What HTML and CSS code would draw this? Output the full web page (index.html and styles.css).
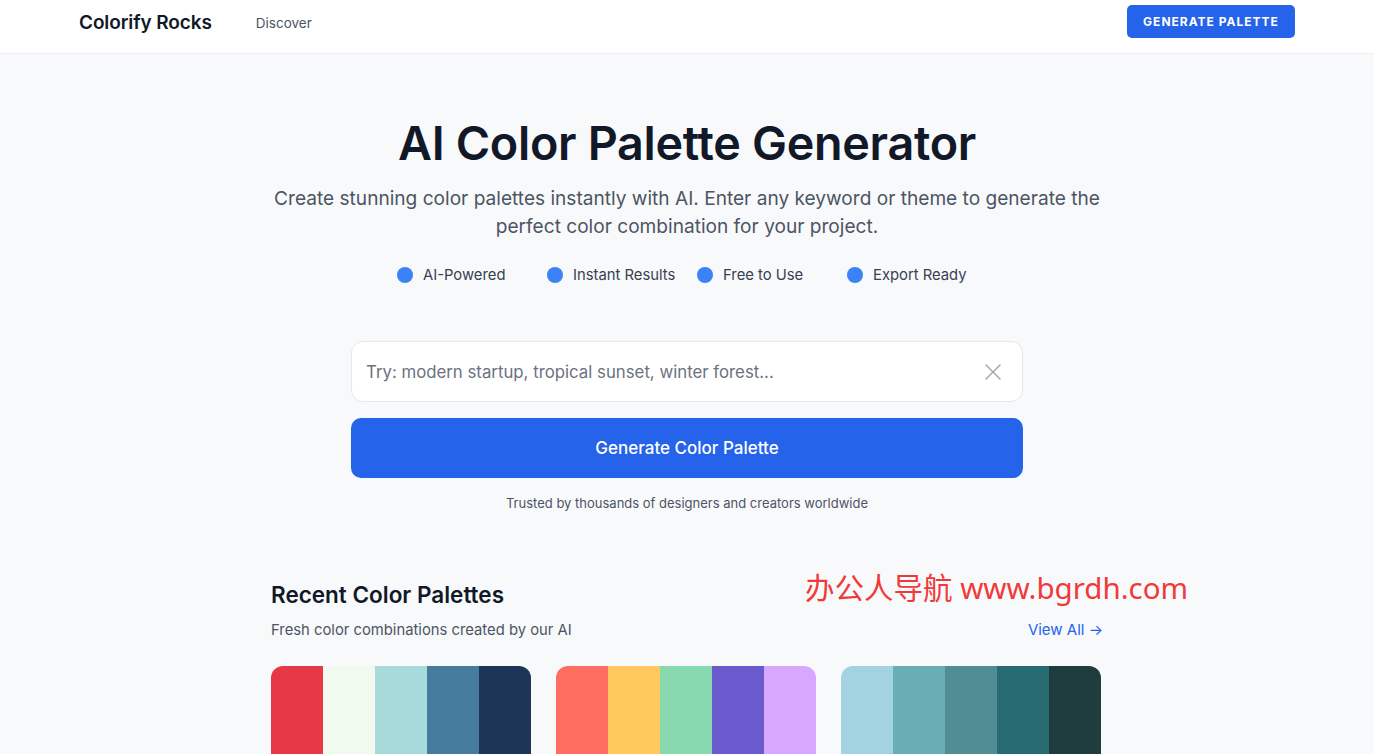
FILE: index.html
```html
<!DOCTYPE html>
<html lang="en">

<head>
    <meta charset="utf-8">
    <title>Colorify Rocks - AI Color Palette Generator</title>
    <link rel="stylesheet" href="styles.css">
</head>

<body>
    <header class="topbar">
        <div class="topbar-inner">
            <div class="brand">
                <a class="logo" href="#">Colorify Rocks</a>
                <a class="nav-link" href="#">Discover</a>
            </div>
            <button class="btn-small">Generate Palette</button>
        </div>
    </header>

    <main>
        <section class="hero">
            <h1>AI Color Palette Generator</h1>
            <p class="lead">
                Create stunning color palettes instantly with AI. Enter any keyword or theme to generate the
                perfect color combination for your project.
            </p>
            <ul class="features">
                <li><span class="dot"></span>AI-Powered</li>
                <li><span class="dot"></span>Instant Results</li>
                <li><span class="dot"></span>Free to Use</li>
                <li><span class="dot"></span>Export Ready</li>
            </ul>

            <form class="search">
                <div class="search-box">
                    <input type="text" placeholder="Try: modern startup, tropical sunset, winter forest...">
                    <button type="button" class="clear" aria-label="Clear">
                        <svg width="18" height="18" viewBox="0 0 18 18" fill="none" stroke="currentColor"
                            stroke-width="1.4" stroke-linecap="round">
                            <path d="M2 2L16 16M16 2L2 16" />
                        </svg>
                    </button>
                </div>
                <button type="button" class="btn-big">Generate Color Palette</button>
                <p class="trusted">Trusted by thousands of designers and creators worldwide</p>
            </form>
        </section>

        <section class="recent">
            <div class="recent-head">
                <h2>Recent Color Palettes</h2>
                <div class="recent-sub">
                    <span>Fresh color combinations created by our AI</span>
                    <a href="#">View All &rarr;</a>
                </div>
            </div>
            <div class="cards">
                <div class="card">
                    <span style="background:#e63946"></span>
                    <span style="background:#f1faee"></span>
                    <span style="background:#a8dadc"></span>
                    <span style="background:#457b9d"></span>
                    <span style="background:#1d3557"></span>
                </div>
                <div class="card">
                    <span style="background:#ff6f61"></span>
                    <span style="background:#ffc95d"></span>
                    <span style="background:#88d8b0"></span>
                    <span style="background:#6a5acd"></span>
                    <span style="background:#d8a7ff"></span>
                </div>
                <div class="card">
                    <span style="background:#a3d2e0"></span>
                    <span style="background:#69aeb5"></span>
                    <span style="background:#508d94"></span>
                    <span style="background:#286c73"></span>
                    <span style="background:#1f3d3f"></span>
                </div>
            </div>
            <div class="stamp">办公人导航 www.bgrdh.com</div>
        </section>
    </main>
</body>

</html>
```

FILE: styles.css
```css
* {
    box-sizing: border-box;
    font-family: Inter, 'Noto Sans', sans-serif;
}

html,
body {
    margin: 0;
    background-color: #f8f9fb;
    color: #111827;
}

a {
    text-decoration: none;
}

/* top bar */

.topbar {
    background: #fff;
    border-bottom: 1px solid #eef0f3;
}

.topbar-inner {
    max-width: 1280px;
    margin: 0 auto;
    padding: 0 32px;
    height: 53px;
    display: flex;
    align-items: center;
    justify-content: space-between;
}

.brand {
    display: flex;
    align-items: center;
    gap: 44px;
}

.logo {
    color: #111827;
    font-size: 19px;
    font-weight: 600;
    letter-spacing: -.1px;
    margin-top: -8px;
}

.nav-link {
    color: #4b5563;
    font-size: 13.5px;
    margin-top: -8px;
}

.btn-small {
    background: #2563eb;
    color: #fff;
    border: 0;
    border-radius: 5px;
    height: 33px;
    width: 168px;
    margin-top: -10px;
    font-size: 12px;
    font-weight: 700;
    letter-spacing: 1px;
    text-transform: uppercase;
}

/* hero */

.hero {
    text-align: center;
    padding-top: 62px;
}

h1 {
    margin: 0;
    font-size: 46.7px;
    line-height: 55px;
    font-weight: 600;
    letter-spacing: -.3px;
}

.lead {
    max-width: 850px;
    margin: 13px auto 0;
    font-size: 19.1px;
    line-height: 28px;
    color: #4b5563;
}

.features {
    list-style: none;
    padding: 0;
    margin: 23px auto 0;
    display: grid;
    grid-template-columns: repeat(4, 130px);
    gap: 20px;
    justify-content: center;
}

.features li {
    display: flex;
    align-items: center;
    gap: 10px;
    font-size: 14.8px;
    line-height: 24px;
    color: #374151;
    white-space: nowrap;
}

.dot {
    width: 16px;
    height: 16px;
    border-radius: 50%;
    background: #3b82f6;
}

.search {
    width: 672px;
    margin: 54px auto 0;
}

.search-box {
    display: flex;
    align-items: center;
    height: 61px;
    background: #fff;
    border: 1px solid #e5e7eb;
    border-radius: 12px;
    padding: 0 20px 0 14px;
}

.search-box input {
    flex: 1;
    border: 0;
    outline: 0;
    padding: 0;
    font-size: 16.8px;
    color: #111827;
    background: transparent;
}

.search-box input::placeholder {
    color: #6b7280;
}

.clear {
    border: 0;
    background: none;
    color: #9ca3af;
    padding: 0;
    display: flex;
}

.btn-big {
    display: block;
    width: 100%;
    height: 60px;
    margin-top: 16px;
    background: #2563eb;
    color: #fff;
    border: 0;
    border-radius: 10px;
    font-size: 17px;
    font-weight: 500;
}

.trusted {
    margin: 15px 0 0;
    font-size: 13px;
    line-height: 20px;
    color: #4b5563;
}

/* recent palettes */

.recent {
    position: relative;
    width: 832px;
    margin: 67px auto 0;
}

.recent h2 {
    margin: 0;
    font-size: 22.5px;
    line-height: 30px;
    font-weight: 600;
}

.recent-sub {
    display: flex;
    justify-content: space-between;
    align-items: center;
    margin-top: 9px;
    font-size: 14.8px;
    line-height: 22px;
    color: #4b5563;
}

.recent-sub a {
    color: #2563eb;
    font-size: 15px;
}

.cards {
    display: grid;
    grid-template-columns: repeat(3, 260px);
    gap: 25px;
    margin-top: 25px;
}

.card {
    display: flex;
    height: 140px;
    border-radius: 12px;
    overflow: hidden;
}

.card span {
    flex: 1;
}

.stamp {
    position: absolute;
    left: 534px;
    top: -15px;
    color: #f03a3a;
    font-size: 29.5px;
    white-space: nowrap;
    font-family: 'Noto Sans', 'Noto Sans CJK SC', sans-serif;
}
```
